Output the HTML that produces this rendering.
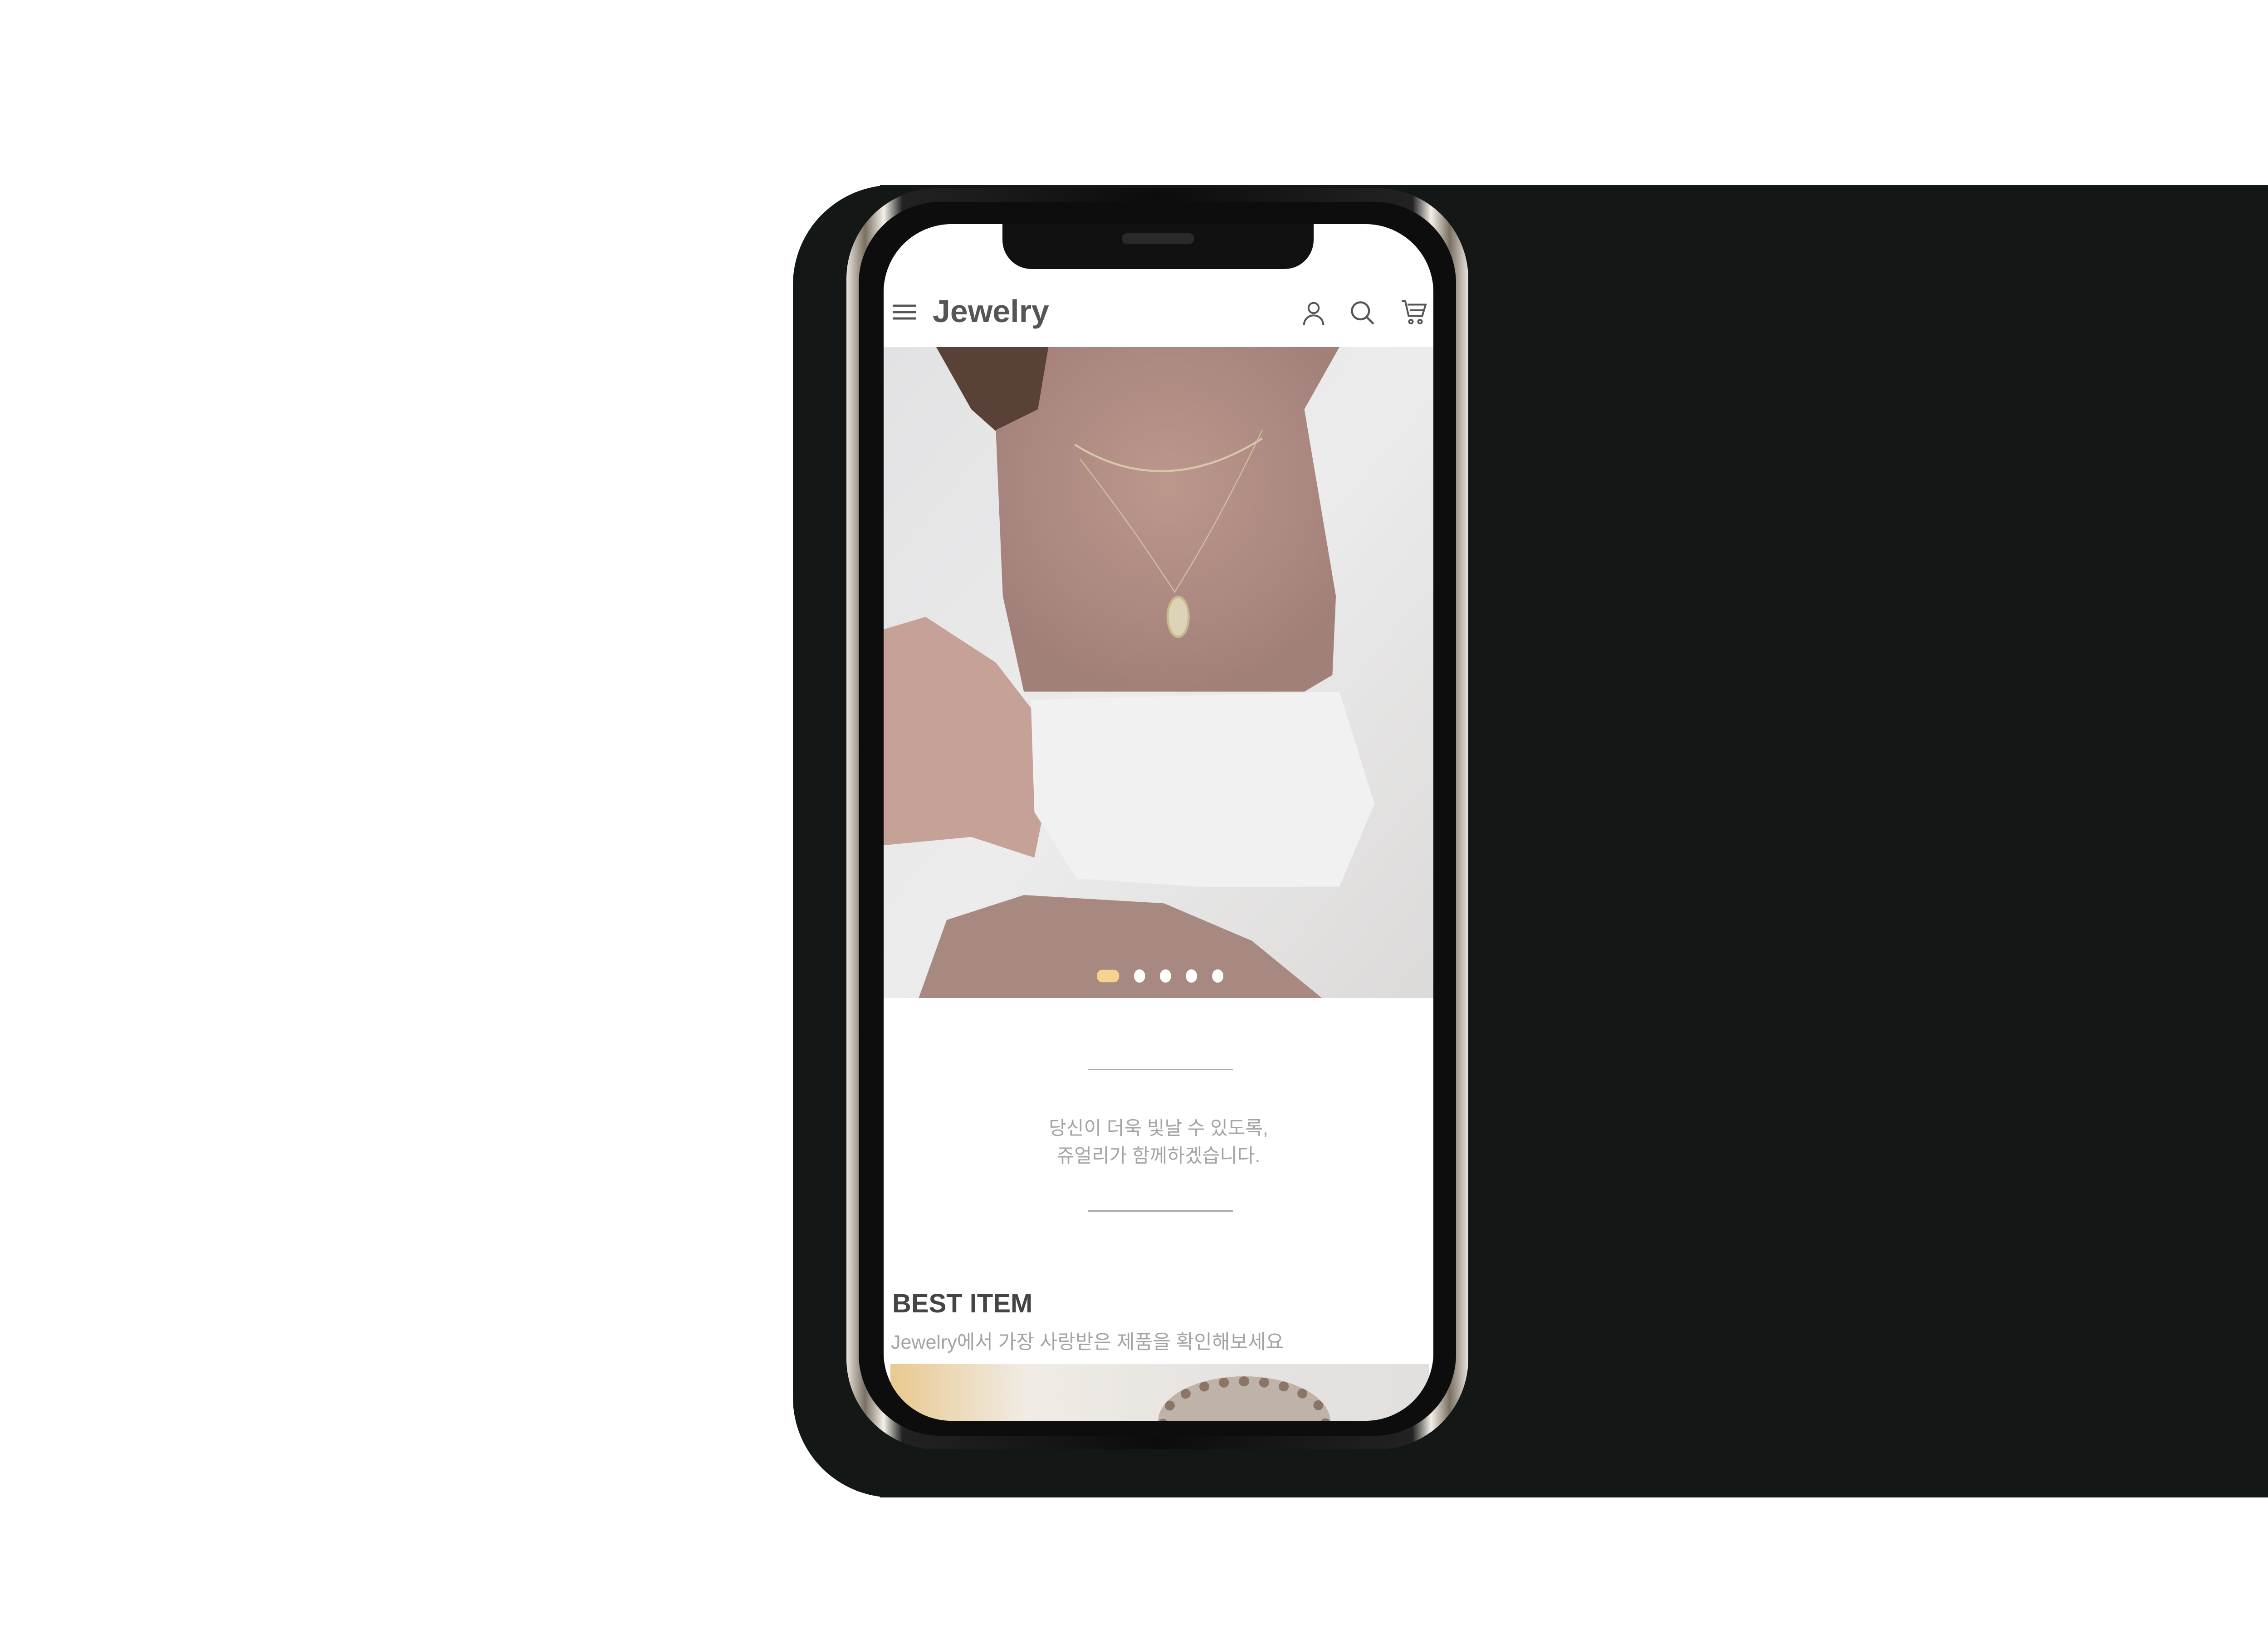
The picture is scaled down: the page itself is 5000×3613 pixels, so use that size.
<!DOCTYPE html>
<html><head><meta charset="utf-8"><style>
html,body{margin:0;padding:0;width:5000px;height:3613px;background:#fff;overflow:hidden;font-family:"Liberation Sans","Noto Sans CJK KR",sans-serif}
.abs{position:absolute}
</style></head><body>
<div class="abs" style="left:1748px;top:408px;width:3252px;height:2893px;background:#131715;border-radius:220px 0 0 220px"></div>
<div class="abs" style="left:1940px;top:408px;width:3060px;height:2893px;background:#131715"></div>
<!-- phone frame -->
<div class="abs" style="left:1866px;top:415px;width:1371px;height:2780px;border-radius:200px;background:linear-gradient(90deg,#e8e4dc,#7a6f62 3%,#f4f0e8 6%,#222 9%,#0c0c0c 50%,#222 91%,#f4f0e8 94%,#7a6f62 97%,#e8e4dc)"></div>
<div class="abs" style="left:1893px;top:445px;width:1317px;height:2720px;border-radius:180px;background:#0d0d0d"></div>
<!-- screen -->
<div class="abs" style="left:1948px;top:494px;width:1212px;height:2638px;border-radius:150px;overflow:hidden;background:#fff">
  <div class="abs" style="left:262px;top:0;width:686px;height:99px;background:#111;border-radius:0 0 64px 64px"></div>
  <div class="abs" style="left:525px;top:20px;width:160px;height:24px;background:#2a2a2a;border-radius:12px"></div>
  <svg class="abs" style="left:20px;top:175px" width="52" height="40" viewBox="0 0 52 40"><g stroke="#555" stroke-width="5"><line x1="0" y1="5" x2="52" y2="5"/><line x1="0" y1="19" x2="52" y2="19"/><line x1="0" y1="33" x2="52" y2="33"/></g></svg>
  <div class="abs" style="left:108px;top:152px;font-size:70px;color:#555;font-weight:bold;font-family:'Liberation Sans',sans-serif">Jewelry</div>
  <svg class="abs" style="left:918px;top:165px" width="60" height="60" viewBox="0 0 24 24" fill="none" stroke="#555" stroke-width="1.6"><circle cx="12" cy="8" r="4.5"/><path d="M3.5 23c0-5 4-8.5 8.5-8.5s8.5 3.5 8.5 8.5"/></svg>
  <svg class="abs" style="left:1025px;top:165px" width="60" height="60" viewBox="0 0 24 24" fill="none" stroke="#555" stroke-width="1.8"><circle cx="10.5" cy="10.5" r="7.5"/><line x1="16" y1="16" x2="22" y2="22"/></svg>
  <svg class="abs" style="left:1140px;top:165px" width="60" height="60" viewBox="0 0 24 24" fill="none" stroke="#555" stroke-width="1.6"><path d="M1 2h3l3 13h12l3-10H6"/><line x1="8" y1="10" x2="20" y2="10"/><circle cx="9" cy="20" r="1.6"/><circle cx="17" cy="20" r="1.6"/></svg>
  <svg class="abs" style="left:0;top:271px" width="1212" height="1435" viewBox="0 0 1568 1568" preserveAspectRatio="none">
    <defs><linearGradient id="bg" x1="0" y1="0" x2="1" y2="1"><stop offset="0" stop-color="#e2e2e4"/><stop offset="0.5" stop-color="#ececec"/><stop offset="1" stop-color="#dcdad9"/></linearGradient>
    <radialGradient id="sk" cx="0.5" cy="0.4" r="0.6"><stop offset="0" stop-color="#bc978c"/><stop offset="1" stop-color="#a2807a"/></radialGradient></defs>
    <rect width="1568" height="1568" fill="url(#bg)"/>
    <path d="M150 0 L480 0 L440 150 L330 210 L250 150 Z" fill="#5a4138"/>
    <path d="M470 0 L1300 0 L1200 150 L1290 600 L1280 790 L1200 830 L400 830 L340 600 L320 200 L440 150 Z" fill="url(#sk)"/>
    <path d="M0 680 L120 650 L320 760 L430 880 L480 1020 L430 1230 L250 1180 L0 1200 Z" fill="#c5a198"/>
    <path d="M100 1568 L180 1380 L400 1320 L800 1340 L1050 1430 L1250 1568 Z" fill="#a88981"/>
    <path d="M420 850 L1300 830 L1400 1100 L1300 1300 L900 1300 L550 1280 L430 1120 Z" fill="#f2f1f1"/>
    <path d="M545 235 Q800 370 1080 220" stroke="#d8c6a8" stroke-width="5" fill="none"/>
    <path d="M560 270 Q700 420 830 590 Q950 430 1080 200" stroke="#d0c0a0" stroke-width="3" fill="none"/>
    <ellipse cx="840" cy="650" rx="30" ry="48" fill="#ddd3b6" stroke="#c9b98f" stroke-width="6"/>
    <rect x="608" y="1500" width="64" height="30" rx="15" fill="#f6d38e"/>
    <circle cx="730" cy="1515" r="16" fill="#fff"/><circle cx="804" cy="1515" r="16" fill="#fff"/><circle cx="878" cy="1515" r="16" fill="#fff"/><circle cx="953" cy="1515" r="16" fill="#fff"/>
  </svg>
  <div class="abs" style="left:450px;top:1862px;width:320px;height:3px;background:#aaa"></div>
  <div class="abs" style="left:0;top:1962px;width:1212px;text-align:center;font-size:42px;line-height:61px;color:#a3a3a3">당신이 더욱 빛날 수 있도록,<br>쥬얼리가 함께하겠습니다.</div>
  <div class="abs" style="left:450px;top:2174px;width:320px;height:3px;background:#aaa"></div>
  <div class="abs" style="left:19px;top:2346px;font-size:58px;font-weight:bold;color:#444;font-family:'Liberation Sans',sans-serif">BEST ITEM</div>
  <div class="abs" style="left:16px;top:2430px;font-size:43px;color:#a3a3a3;white-space:nowrap">Jewelry에서 가장 사랑받은 제품을 확인해보세요</div>
  <div class="abs" style="left:15px;top:2513px;width:1187px;height:200px;background:linear-gradient(90deg,#e9c98f,#f0ebe4 25%,#e6e3e1 60%,#e2dfdd)"></div>
  <div class="abs" style="left:605px;top:2540px;width:380px;height:200px;border-radius:50% 50% 0 0;border:22px dotted #8a7566;box-sizing:border-box;background:#bfb2a8"></div>
</div>
</body></html>
